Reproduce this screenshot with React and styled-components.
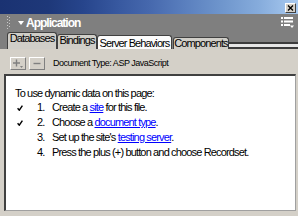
import React from "react";
import styled, { createGlobalStyle } from "styled-components";

const GlobalStyle = createGlobalStyle`
  html, body {
    margin: 0;
    padding: 0;
    background: #d4d0c8;
  }
  body {
    font-family: "Liberation Sans", Arial, sans-serif;
  }
`;

const Window = styled.div`
  width: 298px;
  height: 216px;
  display: flex;
  flex-direction: column;
  background: #d4d0c8;
  overflow: hidden;
`;

const TitleStrip = styled.div`
  height: 14px;
  box-sizing: border-box;
  display: flex;
  justify-content: flex-end;
  align-items: flex-start;
  padding: 3px 2px 0 0;
  background: linear-gradient(
    90deg,
    #1a3272 0%,
    #1e3879 16%,
    #27458c 28%,
    #3859a0 40%,
    #4668ad 50%,
    #5a7fbe 62%,
    #6e95cc 74%,
    #86acdc 87%,
    #a9caf0 100%
  );
`;

const CloseBox = styled.div`
  width: 11px;
  height: 10px;
  box-sizing: border-box;
  background: #d4d0c8;
  border: 1px solid;
  border-color: #ffffff #404040 #404040 #ffffff;
  display: flex;
  align-items: center;
  justify-content: center;
`;

const PanelHeader = styled.div`
  height: 17px;
  box-sizing: border-box;
  background: #7f7f7f;
  display: flex;
  align-items: center;
  padding: 0 4px 0 7px;
`;

const Title = styled.div`
  flex: 1;
  margin-left: 2px;
  color: #ffffff;
  font-weight: bold;
  font-size: 12px;
  letter-spacing: -1px;
  line-height: 14px;
`;

const TabRow = styled.div`
  height: 18px;
  box-sizing: border-box;
  background: #7f7f7f;
  display: flex;
  align-items: flex-start;
  padding-left: 7px;
`;

const Tab = styled.div`
  width: ${(p) => p.$w}px;
  height: ${(p) => p.$h}px;
  margin-top: ${(p) => p.$top}px;
  margin-left: ${(p) => p.$gap || 0}px;
  padding-top: ${(p) => p.$pad || 0}px;
  box-sizing: border-box;
  background: ${(p) => (p.$active ? "#fbfbfb" : "#d0cec8")};
  border: 1px solid #404040;
  border-bottom: none;
  border-radius: 3px 3px 0 0;
  color: #000;
  font-size: 11px;
  letter-spacing: -0.9px;
  line-height: 11px;
  text-align: center;
  white-space: nowrap;
`;

const TabRule = styled.div`
  flex: 1;
  align-self: flex-end;
  height: 7px;
  box-sizing: border-box;
  background: #e6e6e6;
  border-top: 2px solid #3c3c3c;
  border-bottom: 2px solid #3c3c3c;
`;

const Toolbar = styled.div`
  height: 25px;
  box-sizing: border-box;
  display: flex;
  align-items: flex-start;
  gap: 3px;
  padding: 8px 0 0 10px;
  background: #d4d0c8;
`;

const ToolButton = styled.div`
  width: 16px;
  height: 13px;
  box-sizing: border-box;
  background: #d4d0c8;
  border: 1px solid;
  border-color: #ffffff #808080 #808080 #ffffff;
  display: flex;
  align-items: center;
  justify-content: center;
`;

const DocType = styled.div`
  margin-left: 5px;
  font-size: 9px;
  letter-spacing: -0.5px;
  line-height: 13px;
  color: #000;
`;

const Content = styled.div`
  flex: 1;
  margin: 0 2px 5px 4px;
  box-sizing: border-box;
  background: #ffffff;
  border-top: 2px solid #404040;
  border-left: 2px solid #404040;
  border-right: 1px solid #a0a0a0;
  border-bottom: 1px solid #a0a0a0;
  padding: 11px 0 0 9px;
  color: #000;
  font-size: 11px;
  letter-spacing: -0.85px;
`;

const Intro = styled.p`
  margin: 0;
  line-height: 13px;
`;

const Steps = styled.ul`
  list-style: none;
  margin: 0;
  padding: 0;
`;

const Step = styled.li`
  display: flex;
  align-items: center;
  height: 15px;
  line-height: 15px;
  white-space: nowrap;
`;

const CheckCell = styled.span`
  width: 20px;
  margin-left: 2px;
  display: flex;
  align-items: center;
`;

const Num = styled.span`
  width: 15px;
`;

const Link = styled.a`
  color: #0000ff;
  text-decoration: underline;
`;

const Check = () => (
  <svg width="6" height="6" viewBox="0 0 6 6">
    <path d="M0.6 3.2 L2.3 5.2 L5.4 0.6" fill="none" stroke="#000" strokeWidth="1.4" />
  </svg>
);

const steps = [
  { n: "1.", done: true, body: <>Create a <Link href="#">site</Link> for this file.</> },
  { n: "2.", done: true, body: <>Choose a <Link href="#">document type</Link>.</> },
  { n: "3.", done: false, body: <>Set up the site's <Link href="#">testing server</Link>.</> },
  { n: "4.", done: false, body: <>Press the plus (+) button and choose Recordset.</> },
];

const App = () => {
  return (
    <Window>
      <GlobalStyle />
      <TitleStrip>
        <CloseBox>
          <svg width="7" height="6" viewBox="0 0 7 6">
            <path d="M1 0.5 L6 5.5 M6 0.5 L1 5.5" stroke="#000" strokeWidth="1.3" />
          </svg>
        </CloseBox>
      </TitleStrip>

      <PanelHeader>
        <svg width="5" height="13" viewBox="0 0 5 13">
          <g fill="#c8c8c8">
            <rect x="0" y="0" width="1" height="1" />
            <rect x="2" y="1" width="1" height="1" />
            <rect x="0" y="3" width="1" height="1" />
            <rect x="2" y="4" width="1" height="1" />
            <rect x="0" y="6" width="1" height="1" />
            <rect x="2" y="7" width="1" height="1" />
            <rect x="0" y="9" width="1" height="1" />
            <rect x="2" y="10" width="1" height="1" />
            <rect x="0" y="12" width="1" height="1" />
          </g>
        </svg>
        <svg width="6" height="4" viewBox="0 0 6 4" style={{ marginLeft: 6 }}>
          <path d="M0 0 H6 L3 4 Z" fill="#ffffff" />
        </svg>
        <Title>Application</Title>
        <svg width="13" height="11" viewBox="0 0 13 11">
          <g fill="#ffffff">
            <rect x="0" y="0" width="2" height="2" />
            <rect x="3" y="0" width="9" height="2" />
            <rect x="0" y="3.5" width="2" height="2" />
            <rect x="3" y="3.5" width="9" height="2" />
            <rect x="0" y="7" width="2" height="2" />
            <rect x="3" y="7" width="6" height="2" />
            <path d="M9 8.5 H13 L11 11 Z" />
          </g>
        </svg>
      </PanelHeader>

      <TabRow>
        <Tab $w={50} $h={17} $top={1}>Databases</Tab>
        <Tab $w={40} $h={15} $top={3}>Bindings</Tab>
        <Tab $w={75} $h={14} $top={4} $pad={2} $active>Server Behaviors</Tab>
        <Tab $w={56} $h={12} $top={6} $gap={1}>Components</Tab>
        <TabRule />
      </TabRow>

      <Toolbar>
        <ToolButton>
          <svg width="10" height="9" viewBox="0 0 10 9">
            <path d="M3.5 0.5 V7.5 M0 4 H7" stroke="#808080" strokeWidth="1.4" />
            <path d="M7 7 H10 L8.5 9 Z" fill="#808080" />
          </svg>
        </ToolButton>
        <ToolButton>
          <svg width="8" height="3" viewBox="0 0 8 3">
            <path d="M0.5 1.5 H7.5" stroke="#808080" strokeWidth="1.4" />
          </svg>
        </ToolButton>
        <DocType>Document Type: ASP JavaScript</DocType>
      </Toolbar>

      <Content>
        <Intro>To use dynamic data on this page:</Intro>
        <Steps>
          {steps.map((s) => (
            <Step key={s.n}>
              <CheckCell>{s.done && <Check />}</CheckCell>
              <Num>{s.n}</Num>
              <span>{s.body}</span>
            </Step>
          ))}
        </Steps>
      </Content>
    </Window>
  );
};

export default App;
